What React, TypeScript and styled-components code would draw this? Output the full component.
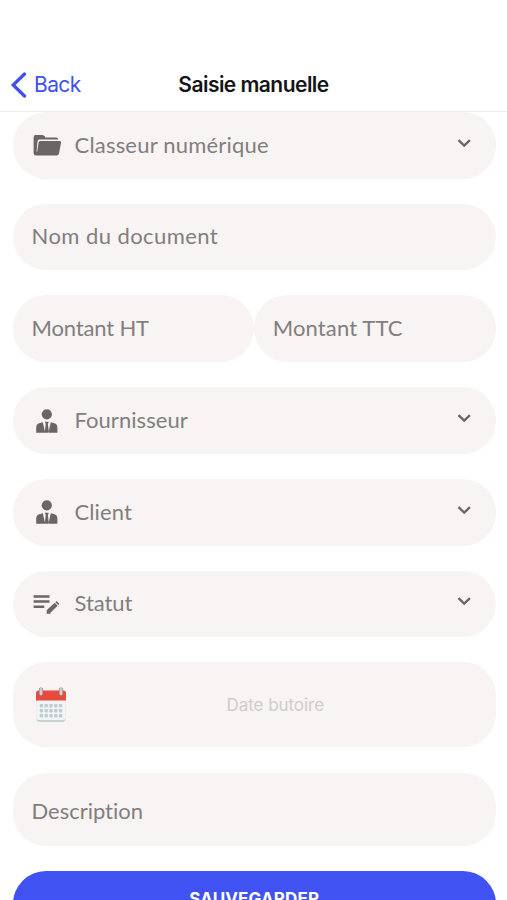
import React from 'react';
import styled, { createGlobalStyle } from 'styled-components';

const GlobalStyle = createGlobalStyle`
  * { box-sizing: border-box; }
  html, body { margin: 0; padding: 0; background: #fff; overflow: hidden; }
`;

const Screen = styled.main`
  width: 507px;
  height: 900px;
  overflow: hidden;
  display: flex;
  flex-direction: column;
  background: #fff;
`;

const Header = styled.header`
  flex: none;
  height: 112px;
  padding: 58px 10px 0;
  display: grid;
  grid-template-columns: 1fr auto 1fr;
  align-items: center;
  border-bottom: 1px solid #ededee;
  font-family: Inter, 'Liberation Sans', sans-serif;
`;

const BackButton = styled.button`
  display: flex;
  align-items: center;
  gap: 7px;
  padding: 0;
  border: 0;
  background: none;
  color: #3f51ee;
  font: 400 21px/26px Inter, 'Liberation Sans', sans-serif;
  letter-spacing: -0.6px;
`;

const Title = styled.h1`
  margin: 0;
  color: #141416;
  font-size: 21px;
  line-height: 26px;
  font-weight: 600;
  letter-spacing: -0.54px;
`;

const Form = styled.form`
  display: flex;
  flex-direction: column;
  gap: 25.1px;
  padding: 0 11.5px 0 13px;
`;

const Field = styled.div<{ $height?: number; $icon?: boolean }>`
  flex: 1 0 auto;
  height: ${(p) => p.$height ?? 66.65}px;
  border-radius: 33px;
  background: #f7f4f3;
  display: flex;
  align-items: center;
  padding: 0 22px 0 ${(p) => (p.$icon ? 20 : 18.5)}px;
`;

const Pair = styled.div`
  display: grid;
  grid-template-columns: 1fr 1fr;
`;

const IconSlot = styled.span`
  width: 41.5px;
  flex: none;
  display: flex;
  color: #6a6665;
`;

const Label = styled.span<{ $tracking: number; $drop?: number }>`
  flex: 1;
  color: #827e7d;
  font: 400 22px/28px Lato, 'Noto Sans', sans-serif;
  font-variant-ligatures: none;
  letter-spacing: ${(p) => p.$tracking}px;
  white-space: nowrap;
  padding-top: ${(p) => p.$drop ?? 0}px;
  padding-bottom: 1.2px;
`;

const ChevronSlot = styled.span`
  display: flex;
  color: #6a6665;
  padding-bottom: 5.4px;
`;

const DateText = styled.span`
  flex: 1;
  text-align: center;
  padding-left: 10px;
  color: #cfcccc;
  font: 400 17px/22px Inter, 'Liberation Sans', sans-serif;
  letter-spacing: -0.05px;
`;

const CalendarSlot = styled.span`
  display: flex;
  margin-left: 2px;
`;

const SaveButton = styled.button`
  height: 67px;
  flex: none;
  border: 0;
  border-radius: 33px;
  background: #4053f2;
  color: #fff;
  display: flex;
  justify-content: center;
  margin-top: -0.6px;
  padding: 17px 0 0;
  font: 700 17px/22px Inter, 'Liberation Sans', sans-serif;
  letter-spacing: 0.15px;
`;

const BackIcon = () => (
  <svg width="17" height="26" viewBox="0 0 17 26" fill="none">
    <path d="M14.5 2 3.2 13 14.5 24" stroke="currentColor" strokeWidth="3.3" strokeLinecap="round" strokeLinejoin="miter" />
  </svg>
);

const Chevron = () => (
  <svg width="20" height="14" viewBox="0 0 20 14" fill="none">
    <path d="M4.5 4.2 10.2 9.6 15.9 4.2" stroke="currentColor" strokeWidth="2.3" />
  </svg>
);

const FolderIcon = () => (
  <svg width="30" height="24" viewBox="0 0 30 24">
    <path
      fill="currentColor"
      d="M.6 20V4.2Q.6 2 2.8 2h6.4q2 0 2.6 1.6l.4 1h11Q25 4.6 25.2 6.4H6.4Q4.7 6.4 4.5 8.2L3.6 18.6h.6L5.6 9.6Q5.8 8 7.4 8h19.4q1.6 0 1.3 1.5L26 20.5q-.4 2-2.4 2H3.2Q.6 22.5.6 20Z"
    />
  </svg>
);

const PersonIcon = () => (
  <svg width="28" height="26" viewBox="0 0 28 26" fill="currentColor">
    <circle cx="13.8" cy="6.3" r="5.1" />
    <path d="M3.2 24.8v-5q0-3.8 3-4.6l3.6-1 2.4 10.6ZM24.4 24.8v-5q0-3.8-3-4.6l-3.6-1-2.4 10.6ZM11.8 13.8h4l-.9 2.2 1 8.8h-4.2l1-8.8Z" />
  </svg>
);

const StatusIcon = () => (
  <svg width="29" height="22" viewBox="0 0 29 22" fill="none" stroke="currentColor">
    <path d="M.6 3.4h15.9M.6 8.6h15.9M.6 13.8h10.7" strokeWidth="2.5" />
    <path d="m15.6 18.4 7.6-7.2" strokeWidth="4.3" />
    <path d="m23.8 10.6 1.2-1.2" strokeWidth="4" />
    <path d="M13.7 20.8v-3.6l.6-.5 3.5 3.3-.8.8Z" fill="currentColor" stroke="none" />
  </svg>
);

const dotColumns = [6.4, 11.2, 16, 20.8, 25.6];
const dotRows = [18.7, 23.7, 28.7];

const CalendarIcon = () => (
  <svg width="32" height="36" viewBox="0 0 32 36">
    <path d="M1.7 13h28.6v19.3q0 2.6-2.6 2.6H4.3q-2.6 0-2.6-2.6Z" fill="#c6d1d6" />
    <path d="M1.7 13h28.6v17.8q0 2.2-2.4 2.2H4.1q-2.4 0-2.4-2.2Z" fill="#f2f5f6" />
    <path d="M1 13.5V6.3Q1 3.5 3.8 3.5h24.4Q31 3.5 31 6.3v7.2Z" fill="#e84b3e" />
    {dotRows.map((y) =>
      dotColumns.map((x) => <rect key={`${x}-${y}`} x={x - 1.7} y={y - 1.7} width="3.4" height="3.4" rx=".8" fill="#becbd1" />),
    )}
    <path d="M6 7.4V2.6M26 7.4V2.6" stroke="#b0574e" strokeWidth="4.2" strokeLinecap="round" />
    <path d="M6 6.8V2.4M26 6.8V2.4" stroke="#c9d1d4" strokeWidth="3.2" strokeLinecap="round" />
  </svg>
);

type SelectProps = { icon: React.ReactNode; label: string; tracking: number };

const SelectField = ({ icon, label, tracking }: SelectProps) => (
  <Field $icon>
    <IconSlot>{icon}</IconSlot>
    <Label $tracking={tracking}>{label}</Label>
    <ChevronSlot><Chevron /></ChevronSlot>
  </Field>
);

export default function App() {
  return (
    <>
      <GlobalStyle />
      <Screen>
        <Header>
          <BackButton type="button"><BackIcon />Back</BackButton>
          <Title>Saisie manuelle</Title>
        </Header>
        <Form>
          <SelectField icon={<FolderIcon />} label="Classeur numérique" tracking={0.2} />
          <Field><Label $tracking={0.43}>Nom du document</Label></Field>
          <Pair>
            <Field><Label $tracking={-0.15}>Montant HT</Label></Field>
            <Field><Label $tracking={0.13}>Montant TTC</Label></Field>
          </Pair>
          <SelectField icon={<PersonIcon />} label="Fournisseur" tracking={0.05} />
          <SelectField icon={<PersonIcon />} label="Client" tracking={0.1} />
          <SelectField icon={<StatusIcon />} label="Statut" tracking={-0.05} />
          <Field $height={85} $icon>
            <CalendarSlot><CalendarIcon /></CalendarSlot>
            <DateText>Date butoire</DateText>
          </Field>
          <Field $height={73.5}><Label $tracking={-0.02} $drop={5.5}>Description</Label></Field>
          <SaveButton type="button">SAUVEGARDER</SaveButton>
        </Form>
      </Screen>
    </>
  );
}
